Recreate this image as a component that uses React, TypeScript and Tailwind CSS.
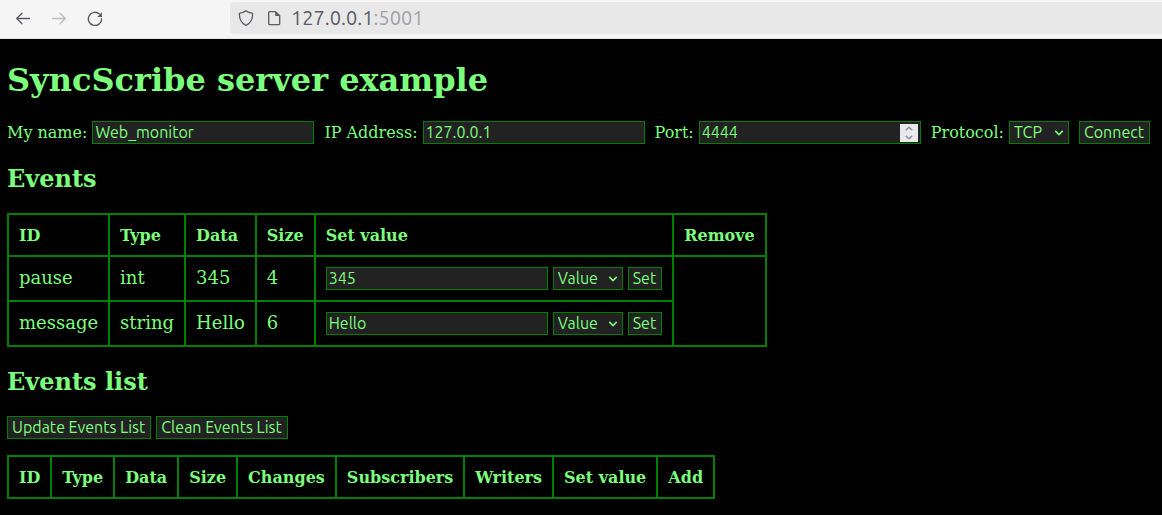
import { useState, type ReactNode } from "react";

const controlText = "font-['Ubuntu','Noto_Sans',sans-serif] text-[16px] leading-[21px]";

function TextField({ id, label, value }: { id: string; label: string; value: string }) {
  const [text, setText] = useState(value);
  return (
    <input
      id={id}
      aria-label={label}
      type="text"
      value={text}
      onChange={(e) => setText(e.target.value)}
      className={`${controlText} h-[23px] w-[222px] border border-[#008000] bg-[#222222] px-0.5 pb-0.5 outline-none`}
    />
  );
}

function NumberField({ id, value }: { id: string; value: number }) {
  const [num, setNum] = useState(value);
  return (
    <div className="flex h-[23px] w-[222px] items-center border border-[#008000] bg-[#222222] pr-0.5">
      <input
        id={id}
        type="number"
        value={num}
        onChange={(e) => setNum(Number(e.target.value))}
        className={`${controlText} h-[21px] min-w-0 flex-1 px-0.5 outline-none [appearance:textfield] [&::-webkit-inner-spin-button]:appearance-none`}
      />
      <div className="flex h-[18px] w-[18px] flex-col bg-[#e9e9ed] text-[#8f8f9d]">
        <button type="button" aria-label="Increase" onClick={() => setNum(num + 1)} className="flex flex-1 items-center justify-center">
          <svg width="8" height="5" viewBox="0 0 8 5" fill="none" stroke="currentColor" strokeWidth="1.5">
            <path d="M0.8 4.3 4 1.2l3.2 3.1" />
          </svg>
        </button>
        <button type="button" aria-label="Decrease" onClick={() => setNum(num - 1)} className="flex flex-1 items-center justify-center">
          <svg width="8" height="5" viewBox="0 0 8 5" fill="none" stroke="currentColor" strokeWidth="1.5">
            <path d="M0.8 0.7 4 3.8l3.2-3.1" />
          </svg>
        </button>
      </div>
    </div>
  );
}

function Dropdown({ id, label, options, width }: { id: string; label: string; options: string[]; width: string }) {
  return (
    <div className={`relative ${width}`}>
      <select
        id={id}
        aria-label={label}
        className={`${controlText} block h-[23px] w-full appearance-none border border-[#008000] bg-[#222222] pl-1 outline-none`}
      >
        {options.map((o) => (
          <option key={o}>{o}</option>
        ))}
      </select>
      <svg
        className="pointer-events-none absolute top-[9px] right-[5px]"
        width="10"
        height="6"
        viewBox="0 0 10 6"
        fill="none"
        stroke="currentColor"
        strokeWidth="1.5"
      >
        <path d="M1.3 0.9 5 4.6l3.7-3.7" />
      </svg>
    </div>
  );
}

function Button({ children }: { children: ReactNode }) {
  return (
    <button type="button" className={`${controlText} h-[23px] border border-[#008000] bg-[#222222] pr-[5px] pl-1 whitespace-nowrap`}>
      {children}
    </button>
  );
}

function Field({ id, label, children }: { id: string; label: string; children: ReactNode }) {
  return (
    <div className="flex items-center gap-[5px]">
      <label htmlFor={id} className="whitespace-nowrap">
        {label}
      </label>
      {children}
    </div>
  );
}

const border = "border-2 border-[#008000]";
const cell = `${border} p-[10px] align-top`;

function HeaderRow({ names }: { names: string[] }) {
  return (
    <tr>
      {names.map((n) => (
        <th key={n} scope="col" className={`${border} px-[10px] pt-[11px] pb-[9px] text-left text-[16px] leading-5 font-bold whitespace-nowrap`}>
          {n}
        </th>
      ))}
    </tr>
  );
}

const events = [
  { id: "pause", type: "int", data: "345", size: 4 },
  { id: "message", type: "string", data: "Hello", size: 6 },
];

function BrowserBar() {
  return (
    <header className="flex h-[39px] items-start border-b border-[#e3e3e6] bg-[#f5f5f5] pt-0.5 text-[#5b5b66]">
      <nav className="flex h-8 w-[230px] shrink-0 items-center gap-5 pl-[15px]">
        <button type="button" aria-label="Back">
          <svg width="16" height="16" viewBox="0 0 16 16" fill="none" stroke="currentColor" strokeWidth="1.3" strokeLinecap="round" strokeLinejoin="round">
            <path d="M14.5 8.5H1.8M7 3.2 1.7 8.5 7 13.8" />
          </svg>
        </button>
        <button type="button" aria-label="Forward" disabled className="text-[#bbbbc0]">
          <svg width="16" height="16" viewBox="0 0 16 16" fill="none" stroke="currentColor" strokeWidth="1.3" strokeLinecap="round" strokeLinejoin="round">
            <path d="M1.5 8.5h12.7M9 3.2l5.3 5.3L9 13.8" />
          </svg>
        </button>
        <button type="button" aria-label="Reload">
          <svg width="16" height="16" viewBox="0 0 16 16" fill="none" stroke="currentColor" strokeWidth="1.4" strokeLinecap="round">
            <path d="M14.6 8.9A6.6 6.6 0 1 1 12.4 4" />
            <path d="M14.9 2.3v4.2a.4.4 0 0 1-.4.4h-4.2z" fill="currentColor" stroke="none" />
          </svg>
        </button>
      </nav>
      <div className="flex h-8 min-w-0 flex-1 items-center rounded-l bg-[#e8e8e8] pl-2">
        <svg width="16" height="16" viewBox="0 0 16 16" className="mr-3 shrink-0" fill="none" stroke="currentColor" strokeWidth="1.3" strokeLinejoin="round">
          <path d="M8 .8C6.500 2.100 4 3 1.900 3.100c-.4 0-.6.3-.6.7C1.400 9 3.700 13.500 8 15.400c4.300-1.900 6.600-6.400 6.700-11.600 0-.4-.2-.7-.6-.7C12 3 9.500 2.100 8 .8z" />
        </svg>
        <svg width="16" height="16" viewBox="0 0 16 16" className="mr-[9px] shrink-0" fill="none" stroke="currentColor" strokeWidth="1.3" strokeLinejoin="round">
          <path d="M9.500 1.700H3.700a1 1 0 0 0-1 1v11a1 1 0 0 0 1 1h9a1 1 0 0 0 1-1V5.800z" />
          <path d="M9.200 1.500v3.800c0 .5.3.8.8.8h3.900z" fill="currentColor" stroke="none" />
        </svg>
        <p className="font-['Ubuntu','Noto_Sans',sans-serif] text-[20px] leading-[34px]">
          127.0.0.1<span className="text-[#a1a1a8]">:5001</span>
        </p>
      </div>
    </header>
  );
}

export default function App() {
  return (
    <div className="min-h-screen bg-black font-['DejaVu_Serif',serif] text-[16px] leading-5 text-[#7cff7c]">
      <BrowserBar />
      <main className="px-[7px] pb-4">
        <h1 className="pt-[22px] text-[32px] leading-[38px] font-bold">SyncScribe server example</h1>

        <form className="mt-[22px] flex flex-wrap items-center gap-[10px]" onSubmit={(e) => e.preventDefault()}>
          <Field id="name" label="My name:">
            <TextField id="name" label="My name" value="Web_monitor" />
          </Field>
          <Field id="ip" label="IP Address:">
            <TextField id="ip" label="IP Address" value="127.0.0.1" />
          </Field>
          <Field id="port" label="Port:">
            <NumberField id="port" value={4444} />
          </Field>
          <Field id="protocol" label="Protocol:">
            <Dropdown id="protocol" label="Protocol" options={["TCP", "UDP"]} width="w-[60px]" />
          </Field>
          <Button>Connect</Button>
        </form>

        <h2 className="mt-5 text-[24px] leading-[29px] font-bold">Events</h2>
        <table className="mt-5 border-collapse">
          <thead>
            <HeaderRow names={["ID", "Type", "Data", "Size", "Set value", "Remove"]} />
          </thead>
          <tbody className="text-[18px] leading-[21px]">
            {events.map((ev, i) => (
              <tr key={ev.id}>
                <td className={cell}>{ev.id}</td>
                <td className={cell}>{ev.type}</td>
                <td className={cell}>{ev.data}</td>
                <td className={cell}>{ev.size}</td>
                <td className={cell}>
                  <div className="flex items-center gap-[5px]">
                    <TextField id={`value-${ev.id}`} label={`Value of ${ev.id}`} value={ev.data} />
                    <Dropdown id={`mode-${ev.id}`} label={`Mode of ${ev.id}`} options={["Value", "File"]} width="w-[70px]" />
                    <Button>Set</Button>
                  </div>
                </td>
                {i === 0 && <td rowSpan={events.length} className={cell} />}
              </tr>
            ))}
          </tbody>
        </table>

        <h2 className="mt-5 text-[24px] leading-[29px] font-bold">Events list</h2>
        <div className="mt-5 flex flex-wrap gap-[5px]">
          <Button>Update Events List</Button>
          <Button>Clean Events List</Button>
        </div>
        <table className="mt-4 border-collapse">
          <thead>
            <HeaderRow names={["ID", "Type", "Data", "Size", "Changes", "Subscribers", "Writers", "Set value", "Add"]} />
          </thead>
        </table>
      </main>
    </div>
  );
}
